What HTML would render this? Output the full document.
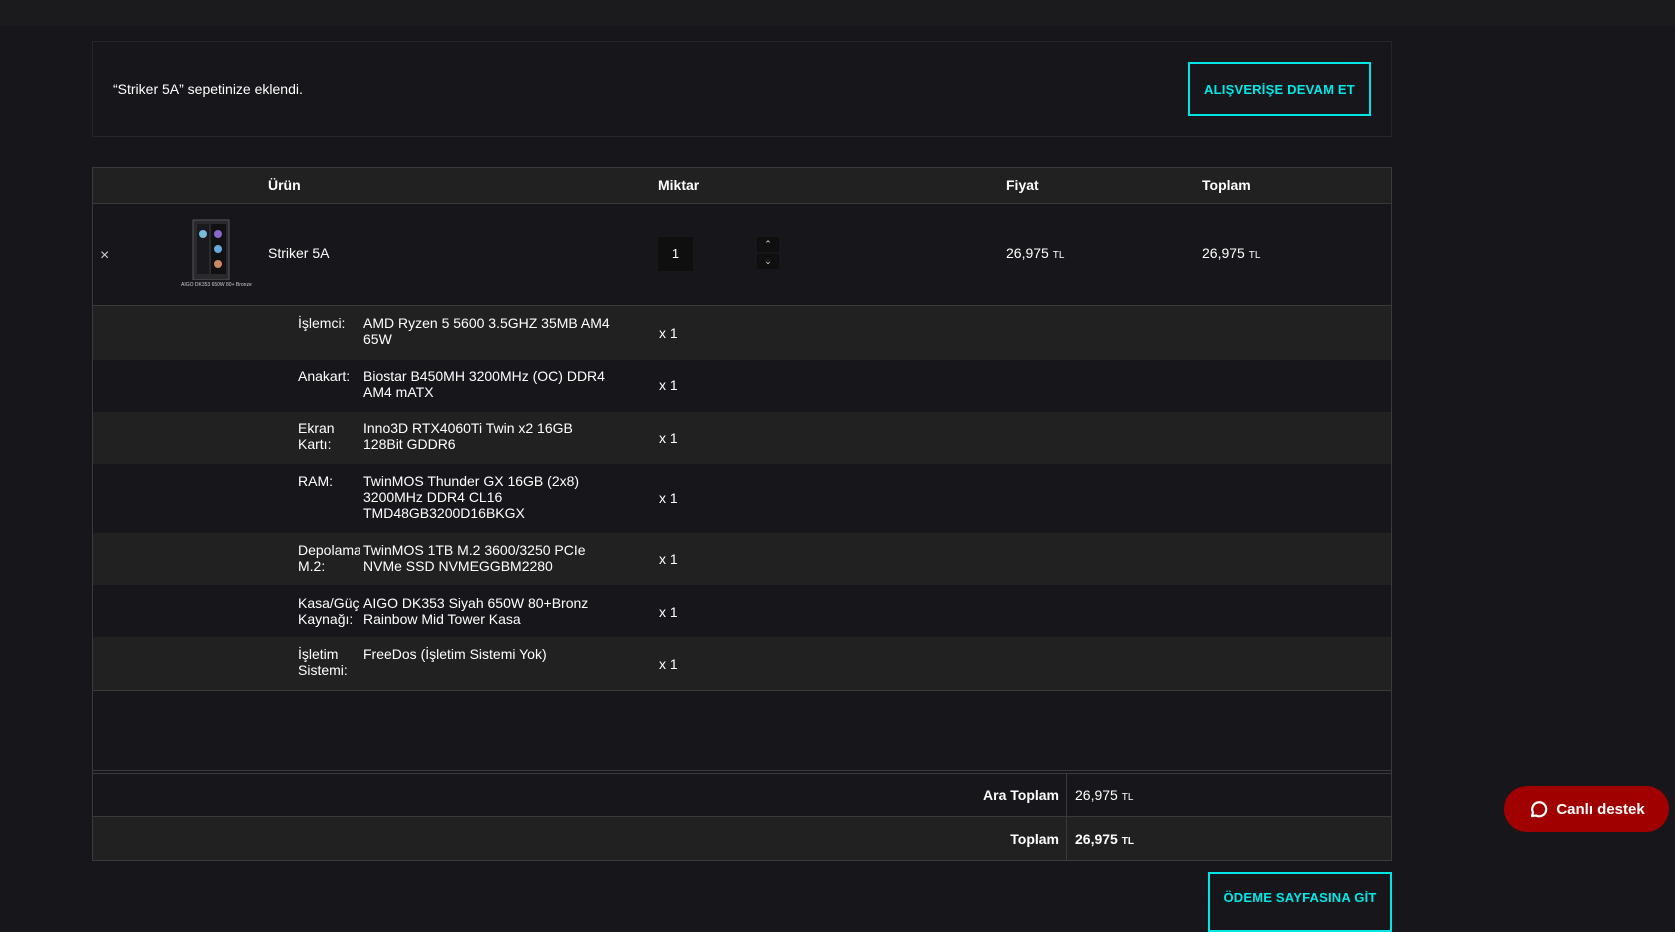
<!DOCTYPE html>
<html><head><meta charset="utf-8">
<style>
*{margin:0;padding:0;box-sizing:border-box}
body{width:1675px;height:916px;background:#17171b;font-family:"Liberation Sans",sans-serif;color:#fff;font-size:14px;position:relative;overflow:hidden}
.a{position:absolute}
.top{left:0;top:0;width:1675px;height:26px;background:#1b1b1e}
.notice{left:92px;top:41px;width:1300px;height:96px;border:1px solid #26262a}
.btn{border:2px solid #00e5e5;color:#00e8e8;font-weight:bold;font-size:13px;display:flex;align-items:center;justify-content:center;letter-spacing:.2px}
.tbl{left:92px;top:167px;width:1300px;height:694px;border:1px solid #3a3a3d}
.row{position:absolute;left:0;width:1298px}
.hl{background:#212121}
.line{position:absolute;left:0;width:1298px;height:1px;background:#3a3a3d}
.lab{position:absolute;left:205px;width:62px;line-height:16px;font-size:14px}
.val{position:absolute;left:270px;width:250px;line-height:16px;font-size:14px}
.x1{position:absolute;left:566px;font-size:14px}
.small{font-size:10px}
</style></head><body>
<div class="a top"></div>
<div class="a notice">
<div class="a" style="left:20px;top:39px">“Striker 5A” sepetinize eklendi.</div>
</div>
<div class="a btn" style="left:1188px;top:62px;width:183px;height:54px">ALIŞVERİŞE DEVAM ET</div>

<div class="a tbl">
<div class="row hl" style="top:0;height:35px"></div>
<div class="line" style="top:35px"></div>
<div class="a" style="left:175px;top:9px;font-weight:bold">Ürün</div>
<div class="a" style="left:565px;top:9px;font-weight:bold">Miktar</div>
<div class="a" style="left:913px;top:9px;font-weight:bold">Fiyat</div>
<div class="a" style="left:1109px;top:9px;font-weight:bold">Toplam</div>

<div class="a" style="left:7px;top:79px;color:#ccc;font-size:16px">×</div>
<div class="a" style="left:96px;top:50px;width:44px;height:62px">
<svg width="44" height="62" viewBox="0 0 44 62"><rect x="4" y="2" width="36" height="60" fill="#2a2a2e" stroke="#555"/><rect x="8" y="6" width="12" height="50" fill="#1a1a1e"/><rect x="22" y="6" width="15" height="50" fill="#111"/><circle cx="14" cy="16" r="4" fill="#7bd"/><circle cx="29" cy="16" r="4" fill="#86c"/><circle cx="29" cy="31" r="4" fill="#6ad"/><circle cx="29" cy="46" r="4" fill="#c86"/></svg>
</div>
<div class="a small" style="left:88px;top:114px;font-size:5px;color:#ccc;white-space:nowrap">AIGO DK353 650W 80+ Bronze</div>
<div class="a" style="left:175px;top:77px">Striker 5A</div>
<div class="a" style="left:565px;top:69px;width:35px;height:34px;background:#0f0f10;text-align:center;line-height:34px;font-size:13px">1</div>
<div class="a" style="left:664px;top:69px;width:22px;height:34px;font-size:9px;color:#ddd;text-align:center;line-height:15px"><div style="background:#0f0f10">⌃</div><div style="background:#0f0f10;margin-top:2px">⌄</div></div>
<div class="a" style="left:913px;top:77px">26,975 <span class="small">TL</span></div>
<div class="a" style="left:1109px;top:77px">26,975 <span class="small">TL</span></div>
<div class="line" style="top:137px"></div>

<div class="row hl" style="top:138px;height:54px"></div>
<div class="row hl" style="top:244px;height:52px"></div>
<div class="row hl" style="top:365px;height:52px"></div>
<div class="row hl" style="top:469px;height:53px"></div>

<div class="lab" style="top:147px">İşlemci:</div><div class="val" style="top:147px">AMD Ryzen 5 5600 3.5GHZ 35MB AM4 65W</div><div class="x1" style="top:157px">x 1</div>
<div class="lab" style="top:200px">Anakart:</div><div class="val" style="top:200px">Biostar B450MH 3200MHz (OC) DDR4 AM4 mATX</div><div class="x1" style="top:209px">x 1</div>
<div class="lab" style="top:252px">Ekran Kartı:</div><div class="val" style="top:252px">Inno3D RTX4060Ti Twin x2 16GB<br>128Bit GDDR6</div><div class="x1" style="top:262px">x 1</div>
<div class="lab" style="top:305px">RAM:</div><div class="val" style="top:305px">TwinMOS Thunder GX 16GB (2x8) 3200MHz DDR4 CL16 TMD48GB3200D16BKGX</div><div class="x1" style="top:322px">x 1</div>
<div class="lab" style="top:374px;overflow:hidden;white-space:nowrap">Depolama<br>M.2:</div><div class="val" style="top:374px">TwinMOS 1TB M.2 3600/3250 PCIe<br>NVMe SSD NVMEGGBM2280</div><div class="x1" style="top:383px">x 1</div>
<div class="lab" style="top:427px;overflow:hidden;white-space:nowrap">Kasa/Güç<br>Kaynağı:</div><div class="val" style="top:427px">AIGO DK353 Siyah 650W 80+Bronz Rainbow Mid Tower Kasa</div><div class="x1" style="top:436px">x 1</div>
<div class="lab" style="top:478px">İşletim Sistemi:</div><div class="val" style="top:478px">FreeDos (İşletim Sistemi Yok)</div><div class="x1" style="top:488px">x 1</div>
<div class="line" style="top:522px"></div>

<div class="line" style="top:602px"></div>
<div class="line" style="top:605px"></div>
<div class="row hl" style="top:649px;height:43px"></div>
<div class="line" style="top:648px"></div>
<div class="a" style="left:973px;top:606px;width:1px;height:86px;background:#3a3a3d"></div>
<div class="a" style="left:800px;top:619px;width:166px;text-align:right;font-weight:bold">Ara Toplam</div>
<div class="a" style="left:982px;top:619px">26,975 <span class="small">TL</span></div>
<div class="a" style="left:800px;top:663px;width:166px;text-align:right;font-weight:bold">Toplam</div>
<div class="a" style="left:982px;top:663px;font-weight:bold">26,975 <span class="small">TL</span></div>
</div>

<div class="a btn" style="left:1208px;top:872px;width:184px;height:60px;padding-bottom:10px">ÖDEME SAYFASINA GİT</div>

<div class="a" style="left:1504px;top:786px;width:165px;height:46px;background:#a00000;border-radius:23px;display:flex;align-items:center;justify-content:center;font-weight:bold;font-size:15px">
<svg width="20" height="20" viewBox="0 0 20 20" style="margin-right:8px"><path d="M4 17 L5 13.5 A7 7 0 1 1 8 16.5 Z" fill="none" stroke="#fff" stroke-width="2.2" stroke-linejoin="round"/></svg>Canlı destek</div>
</body></html>
